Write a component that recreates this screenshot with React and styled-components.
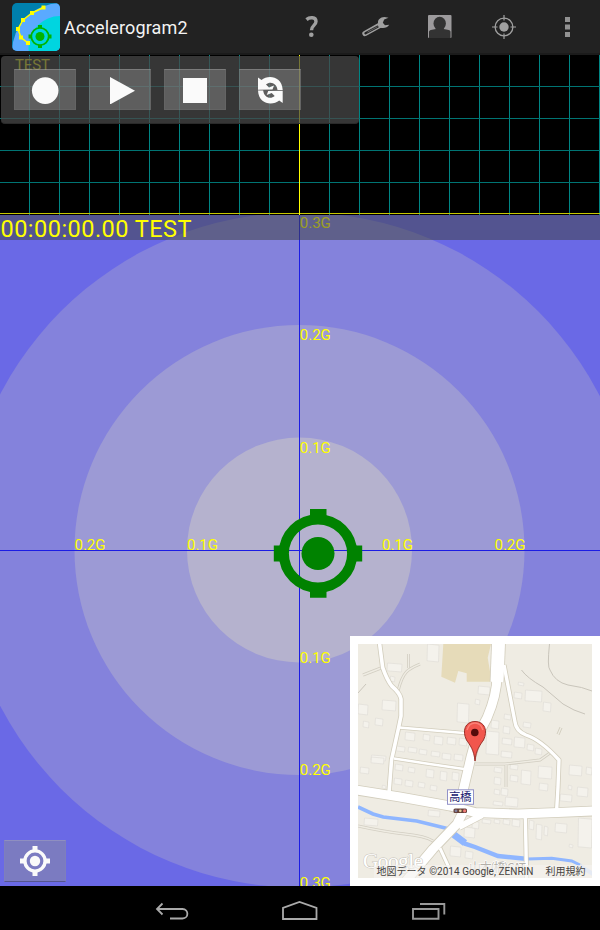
import React from "react";
import styled, { createGlobalStyle } from "styled-components";

const Global = createGlobalStyle`
  html, body { margin: 0; padding: 0; background: #000; overflow: hidden; }
  * { box-sizing: border-box; }
  svg { display: block; }
`;

const Screen = styled.div`
  display: flex;
  flex-direction: column;
  width: 600px;
  height: 930px;
  overflow: hidden;
  background: #000;
  font-family: Roboto, "Noto Sans CJK JP", sans-serif;
`;

const ActionBar = styled.header`
  display: flex;
  align-items: center;
  flex: 0 0 55px;
  padding-left: 12px;
  background: #222;
  border-bottom: 2px solid #1b1b1b;
`;

const Title = styled.h1`
  flex: 1;
  margin: 0 0 0 4px;
  padding-top: 2px;
  color: #f3f3f3;
  font-size: 18px;
  font-weight: 400;
  line-height: 22px;
  letter-spacing: 0.15px;
`;

const Actions = styled.div`
  display: flex;
  margin-right: 1px;
`;

const ActionButton = styled.button`
  display: flex;
  align-items: center;
  justify-content: center;
  width: ${(p) => p.$width || 64}px;
  height: 53px;
  padding: 0;
  border: 0;
  background: none;
`;

const Chart = styled.section`
  position: relative;
  flex: 0 0 160px;
  background: #000;
`;

const Controls = styled.div`
  position: absolute;
  top: 1px;
  left: 1px;
  display: flex;
  gap: 13px;
  width: 358px;
  height: 68px;
  padding: 13px;
  border-radius: 4px;
  background: rgba(72, 72, 72, 0.75);
  border-bottom: 1px solid #2a2a2a;
`;

const ControlButton = styled.button`
  display: flex;
  align-items: center;
  justify-content: center;
  width: 62px;
  height: ${(p) => p.$height || 41}px;
  padding: 0;
  border: 1px solid rgba(160, 160, 160, 0.1);
  border-top-color: rgba(190, 190, 190, 0.3);
  border-bottom-color: ${(p) => p.$edge || "rgba(160,160,160,0.1)"};
  background: rgba(145, 145, 145, 0.44);
`;

const Gauge = styled.section`
  position: relative;
  flex: 0 0 671px;
  background: #6a69e6;
`;

const StatusStrip = styled.div`
  position: absolute;
  top: 0;
  left: 0;
  width: 600px;
  height: 25px;
  background: rgba(60, 64, 60, 0.51);
`;

const RecenterSlot = styled.div`
  position: absolute;
  left: 4px;
  bottom: 4px;
`;

const MapCard = styled.div`
  position: absolute;
  right: 0;
  bottom: 0;
  width: 250px;
  height: 250px;
  padding: 8px;
  background: #fff;
`;

const NavBar = styled.nav`
  display: flex;
  justify-content: center;
  flex: 0 0 44px;
  background: #000;
`;

const NavButton = styled.button`
  width: 128px;
  height: 44px;
  padding: 0;
  border: 0;
  background: none;
`;

function AppLogo() {
  return (
    <svg width="48" height="48" viewBox="12 3 48 48">
      <defs>
        <clipPath id="logo"><rect x="12" y="3" width="48" height="48" rx="5" /></clipPath>
      </defs>
      <g clipPath="url(#logo)">
        <rect x="12" y="3" width="48" height="48" fill="#0080ad" />
        <circle cx="61" cy="52" r="49" fill="#5aaaff" />
        <circle cx="60" cy="47.500" r="31.500" fill="#00d5e0" />
      </g>
      <path d="M43.500 7.500L32 13L23 20L18 29L21 37.500L28 43" fill="none" stroke="#ff0" strokeWidth="1.500" />
      <path d="M41.500 5.500h4v4h-4zM30 11h4v4h-4zM21 18h4v4h-4zM16 27h4v4h-4zM19 35.500h4v4h-4zM26 41h4v4h-4z" fill="#ff0" />
      <circle cx="40" cy="36.500" r="8.700" fill="none" stroke="#00b400" strokeWidth="1.800" />
      <circle cx="40" cy="36.500" r="4.500" fill="#00b400" />
      <path d="M38 25h4v3h-4zM38 45h4v3h-4zM28.500 34.500h3v4h-3zM48.500 34.500h3v4h-3z" fill="#00b400" />
    </svg>
  );
}

const grey = "#a0a0a0";

const QuestionIcon = () => (
  <svg width="14" height="22" viewBox="305 16 14 22">
    <path d="M306.500 19.600C309.500 17 316 16.800 316 21.400C316 25.500 311.500 25.300 311.500 30.200" fill="none" stroke={grey} strokeWidth="3.400" />
    <circle cx="311.300" cy="34.700" r="2.300" fill={grey} />
  </svg>
);

const WrenchIcon = () => (
  <svg width="30" height="24" viewBox="361 15 30 24">
    <path d="M365 33.500L380 25.200" stroke={grey} strokeWidth="5.400" strokeLinecap="round" />
    <path d="M365.500 33.200L377.500 26.700" stroke="#222" strokeWidth="2.400" strokeLinecap="round" />
    <path d="M367.500 32.100L377.500 26.700" stroke={grey} strokeWidth=".5" />
    <path d="M388.500 17.800L384.500 16.900C380 17 377.600 19.800 378 23L378.500 26.500C381.500 29 387 28.500 389.200 24.800L385 25.200L382.800 22.800L384.200 19.500Z" fill={grey} />
  </svg>
);

const PersonIcon = () => (
  <svg width="24" height="24" viewBox="428 15 24 24">
    <rect x="428" y="15" width="23.500" height="23" rx="1" fill="#9c9a9c" />
    <ellipse cx="439.700" cy="23.500" rx="6.200" ry="6.700" fill="#333" />
    <path d="M429 38V31.500Q429.500 30 432 29.800L436 29V26h7.500v3l4 .8Q450 30 450.500 31.500V38z" fill="#333" />
  </svg>
);

const LocateIcon = () => (
  <svg width="24" height="24" viewBox="0 0 24 24" fill="none" stroke={grey}>
    <circle cx="12" cy="12" r="8.900" strokeWidth="1.300" />
    <path d="M12 0v5.500M12 18.500v5.500M0 12h5.500M18.500 12h5.500" strokeWidth="1.200" />
    <circle cx="12" cy="12" r="4.700" fill={grey} stroke="none" />
  </svg>
);

const MoreIcon = () => (
  <svg width="5" height="20" viewBox="0 0 5 20" fill="#929292">
    <path d="M0 0h5v5H0zM0 7.500h5v5H0zM0 15h5v5H0z" />
  </svg>
);

const RecenterIcon = () => (
  <svg width="30" height="30" viewBox="-15 -15 30 30" fill="#fafafa">
    <circle r="10.100" fill="none" stroke="#fafafa" strokeWidth="3.400" />
    <circle r="5.200" />
    <path d="M-2.500-15h5v5h-5zM-2.500 10h5v5h-5zM-15-2.500h5v5h-5zM10-2.500h5v5h-5z" />
  </svg>
);

const Target = () => (
  <g fill="#008200">
    <circle r="34.200" fill="none" stroke="#008200" strokeWidth="10.200" />
    <circle r="16.500" />
    <path d="M-8-44.500H8.500V-32H-8zM-8 32H8.500V44.300H-8zM-44.200-8H-32V8H-44.200zM32-8H44.200V8H32z" />
  </g>
);

function ChartGrid() {
  return (
    <svg width="600" height="160" viewBox="0 55 600 160">
      <g stroke="#008584">
        {Array.from({ length: 20 }, (_, i) => (
          <path key={i} d={`M${29.5 + i * 30} 55V215`} />
        ))}
      </g>
      <path d="M0 86.500H600M0 118.500H600M0 150.500H600M0 182.500H600" stroke="#007473" />
      <path d="M0 213.500H600" stroke="#c8c800" />
      <path d="M299.500 55V215" stroke="#ff0" />
      <text x="15" y="70" fill="#ff0" fontSize="15" textLength="35">TEST</text>
    </svg>
  );
}

const scaleLabels = [
  [299.8, 228, "0.3G"], [299.8, 340.4, "0.2G"], [299.8, 453, "0.1G"],
  [299.8, 663, "0.1G"], [299.8, 775.4, "0.2G"], [299.8, 888, "0.3G"],
  [74.5, 550, "0.2G"], [187, 550, "0.1G"], [382, 550, "0.1G"], [494.5, 550, "0.2G"],
];

function Rings() {
  return (
    <svg width="600" height="671" viewBox="0 215 600 671">
      <circle cx="299.500" cy="550" r="337.500" fill="#8482dc" />
      <circle cx="299.500" cy="550" r="225" fill="#9c9ad5" />
      <circle cx="299.500" cy="550" r="112.500" fill="#b5b2ce" />
      <path d="M299.500 215V886M0 550.500H600" stroke="#1c1ce4" />
      <g fill="#ff0" fontSize="15">
        {scaleLabels.map(([x, y, label]) => (
          <text key={`${x}-${y}`} x={x} y={y} textLength="31">{label}</text>
        ))}
      </g>
      <g transform="translate(318 553.500)"><Target /></g>
    </svg>
  );
}

const roads = [
  ["M379.500 643L382.700 667.700Q387 680 391.700 686Q400 693 401 699L401 716L398.300 729L391.500 760L389 793", 3.6],
  ["M399 727.500L470 733.500", 2.6],
  ["M394 758.500L423 763L464 769", 2.4],
  ["M498.500 643L497 675Q497 695 487 718Q475 739 471 757L463 791L459 805", 9],
  ["M498.500 643L497 682", 13],
  ["M504 665L515 722Q516 731 526 735Q541 740 559 760L558 787L556.500 812", 3.4],
  ["M356 790L400 797L450 806L475 812.500L518 814L558 812.500L594 811", 9],
  ["M463 812L457 824L433 849L406 881", 9],
  ["M459 827L482 815", 6],
  ["M440 848L451 872", 3],
  ["M525.300 814L526 848L526.500 879", 3.4],
];

const buildings = [
  [387, 663, 15, 9], [390, 676, 5, 6], [427, 644, 12, 18], [382, 700, 14, 11], [358, 704, 10, 11],
  [363, 721, 6, 7], [375, 718, 8, 8], [457, 703, 12, 20], [405, 732, 10, 9], [423, 734, 7, 7],
  [434, 736, 9, 9], [447, 737, 9, 8], [459, 738, 8, 8], [396, 746, 9, 6], [408, 747, 9, 6],
  [419, 749, 8, 6], [431, 751, 9, 6], [442, 753, 9, 7], [454, 754, 9, 7], [371, 755, 15, 6],
  [478, 686, 12, 9], [475, 699, 5, 6], [514, 692, 8, 7], [518, 682, 6, 4], [525, 690, 17, 12],
  [543, 702, 8, 10], [504, 714, 7, 6], [503, 726, 7, 8], [491, 720, 8, 9], [486, 731, 13, 24],
  [502, 738, 10, 7], [514, 737, 11, 11], [523, 722, 8, 6], [501, 751, 11, 7], [527, 744, 7, 7],
  [535, 748, 7, 7], [360, 767, 9, 7], [371, 757, 13, 7], [395, 764, 8, 7], [408, 767, 7, 6],
  [426, 769, 8, 9], [440, 771, 7, 10], [452, 772, 7, 9], [394, 778, 8, 7], [405, 780, 8, 7],
  [418, 782, 7, 6], [430, 785, 7, 6], [364, 818, 14, 8], [428, 810, 12, 7], [382, 785, 4, 4],
  [494, 767, 8, 6], [494, 777, 7, 8], [494, 789, 6, 6], [501, 788, 7, 8], [510, 764, 8, 6],
  [510, 775, 8, 7], [521, 770, 10, 15], [538, 766, 14, 13], [539, 783, 9, 8], [493, 801, 10, 5],
  [505, 797, 13, 10], [569, 765, 13, 11], [586, 767, 6, 8], [577, 787, 11, 10], [560, 794, 12, 8],
  [568, 785, 4, 5], [482, 819, 9, 5], [494, 819, 6, 5], [503, 819, 7, 6], [512, 819, 8, 8],
  [529, 820, 5, 10], [536, 824, 6, 16], [544, 826, 4, 10], [555, 823, 12, 10], [569, 844, 4, 4],
  [578, 818, 14, 30], [464, 827, 11, 11], [450, 846, 11, 11], [472, 821, 7, 8], [465, 851, 8, 8],
];

const lanes = "M363 675L381 668M398 691C403 671 408 669 420 664M408.500 668V654M506 765V787M358 826Q385 832 405 834T433 841M475 764L505 764L540 760L550 753";

function StreetMap() {
  return (
    <svg width="234" height="234" viewBox="358 644 234 234">
      <rect x="358" y="644" width="234" height="234" fill="#efece3" />
      <path d="M443.300 644L441.300 676.700L455 682.700L458.300 671L466.700 673.300V681.700H491.700L487.700 657.700L491 644Z" fill="#e6dbb9" />
      <g fill="#f4f2ec" stroke="#e1ded8" strokeWidth=".7">
        {buildings.map(([x, y, w, h], i) => (
          <path key={i} d={`M${x + 0.5} ${y}L${x + w} ${y + 1.2}L${x + w - 0.5} ${y + h}L${x} ${y + h - 1.2}Z`} />
        ))}
      </g>
      <g fill="none" stroke="#c9c5bb" strokeWidth="1">
        <path d="M549.500 644Q547 667 550 670Q555 682 568 685Q583 687 592 691M521.500 670Q527 678 543 687L563 704Q574 711 585 714M358 693L366 684" />
        <path d="M557 734L560 727M559 735L562 728" stroke="#d4d0c1" />
      </g>
      <path d={lanes} fill="none" stroke="#d2cec2" strokeWidth="3" />
      <path d={lanes} fill="none" stroke="#efece3" strokeWidth="1.400" />
      <g fill="none" stroke="#8fb6ff">
        <path d="M358 807L373 814L383.300 817L416.700 821L448.300 828.700" strokeWidth="3.600" />
        <path d="M453 834L465 843.700L475 847L498 856L528 859" strokeWidth="4.400" />
        <path d="M453 834L465 843" strokeWidth="7" />
        <path d="M527 859L551.700 858.300L571.700 861L580 865" strokeWidth="3" />
        <path d="M580 866L593 874" strokeWidth="4" stroke="#c9d9f8" />
      </g>
      <g fill="none" stroke="#d2cdbc" strokeLinejoin="round">
        {roads.map(([d, w]) => <path key={d} d={d} strokeWidth={w + 1.6} />)}
      </g>
      <g fill="none" stroke="#fff" strokeLinejoin="round">
        {roads.map(([d, w]) => <path key={d} d={d} strokeWidth={w} />)}
      </g>
      <path d="M475 761C474 750 470 745 466.500 740C462 731 465 721.500 475 721.500C485 721.500 488 731 483.500 740C480 745 476 750 475 761Z" fill="#f1564d" stroke="#9b3029" strokeWidth="1" />
      <path d="M467 730Q469 723 475 723T483 730" fill="none" stroke="#fb8177" strokeWidth="1.500" />
      <circle cx="474.800" cy="732.500" r="3.800" fill="#540b0b" />
      <rect x="447.500" y="789.800" width="26" height="14.500" fill="#fff" stroke="#9292c8" />
      <text x="449" y="801.300" fontSize="11.500" textLength="22.500" fill="#202070" fontFamily='"Noto Sans CJK JP", sans-serif'>高橋</text>
      <rect x="453.500" y="808.500" width="13.500" height="4.600" rx="1.500" fill="#66403a" />
      <circle cx="456" cy="810.800" r="1.400" fill="#8282a0" />
      <circle cx="460.300" cy="810.800" r="1.400" fill="#e5cf98" />
      <circle cx="464.600" cy="810.800" r="1.600" fill="#f17e79" />
      <text x="363" y="868" fontFamily='"Liberation Serif", serif' fontSize="21.500" textLength="60" fill="#fff" stroke="#c6c2b8" strokeWidth="1" paintOrder="stroke">Google</text>
      <text x="469" y="872" fontFamily='"Noto Sans CJK JP", sans-serif' fontSize="12" textLength="57" fill="#b2afa8" stroke="#fff" strokeWidth="1.200" paintOrder="stroke">山本(橋)CAT</text>
      <rect x="374" y="865" width="218" height="13" fill="#f4f3ef" opacity=".65" />
      <g fill="#45433f" fontSize="10">
        <text x="376.500" y="874.500" textLength="157">地図データ ©2014 Google, ZENRIN</text>
        <text x="545.500" y="874.500" textLength="40">利用規約</text>
      </g>
    </svg>
  );
}

export default function App() {
  return (
    <Screen>
      <Global />
      <ActionBar>
        <AppLogo />
        <Title>Accelerogram2</Title>
        <Actions>
          <ActionButton aria-label="Help"><QuestionIcon /></ActionButton>
          <ActionButton aria-label="Settings"><WrenchIcon /></ActionButton>
          <ActionButton aria-label="Profile"><PersonIcon /></ActionButton>
          <ActionButton aria-label="Locate"><LocateIcon /></ActionButton>
          <ActionButton $width={63} aria-label="More"><MoreIcon /></ActionButton>
        </Actions>
      </ActionBar>
      <Chart>
        <ChartGrid />
        <Controls>
          <ControlButton aria-label="Record">
            <svg width="28" height="28"><circle cx="14.200" cy="14.600" r="13.300" fill="#fafafa" /></svg>
          </ControlButton>
          <ControlButton aria-label="Play">
            <svg width="30" height="28"><path d="M5 1L30 14.700L5 28.500Z" fill="#fafafa" /></svg>
          </ControlButton>
          <ControlButton aria-label="Stop">
            <svg width="24" height="27"><rect y="2" width="24" height="25" fill="#fafafa" /></svg>
          </ControlButton>
          <ControlButton aria-label="Refresh">
            <svg width="26" height="28" viewBox="257 76 26 28" fill="#fafafa">
              <path d="M258 77.500L261.500 80C268 74.500 282 76 282.700 90H277.500C277 83.500 270.500 80.500 266 84.500L269 87.500L274 85.500L272.500 89.500L258 89.800Z" />
              <path d="M282.700 103L279.200 100.500C272.500 106 258.700 104.500 258 90.500H263.200C263.700 97 270.200 100 274.700 96L271.700 93L266.700 95L268.200 91L282.700 90.700Z" />
            </svg>
          </ControlButton>
        </Controls>
      </Chart>
      <Gauge>
        <Rings />
        <StatusStrip>
          <svg width="600" height="25">
            <text x="0.500" y="22" fill="#ff0" fontSize="23.500" textLength="191">00:00:00.00 TEST</text>
          </svg>
        </StatusStrip>
        <RecenterSlot>
          <ControlButton $height={42} $edge="#55558f" aria-label="Recenter">
            <RecenterIcon />
          </ControlButton>
        </RecenterSlot>
        <MapCard><StreetMap /></MapCard>
      </Gauge>
      <NavBar>
        <NavButton aria-label="Back">
          <svg width="128" height="44" viewBox="108 886 128 44" fill="none" stroke="#aaa" strokeWidth="1.800">
            <path d="M157 909H182.500C189 909 189 918.500 182.500 918.500H170M162.500 903.500L157 909L162.500 914.500" />
          </svg>
        </NavButton>
        <NavButton aria-label="Home">
          <svg width="128" height="44" viewBox="236 886 128 44" fill="none" stroke="#aaa" strokeWidth="1.800">
            <path d="M283 919V907.800L299.500 902L316.500 907.800V919Z" />
          </svg>
        </NavButton>
        <NavButton aria-label="Recent apps">
          <svg width="128" height="44" viewBox="364 886 128 44" fill="none" stroke="#999" strokeWidth="1.900">
            <path d="M413 909H438.500V918.800H413ZM420 904H444.300V914.500" />
          </svg>
        </NavButton>
      </NavBar>
    </Screen>
  );
}
